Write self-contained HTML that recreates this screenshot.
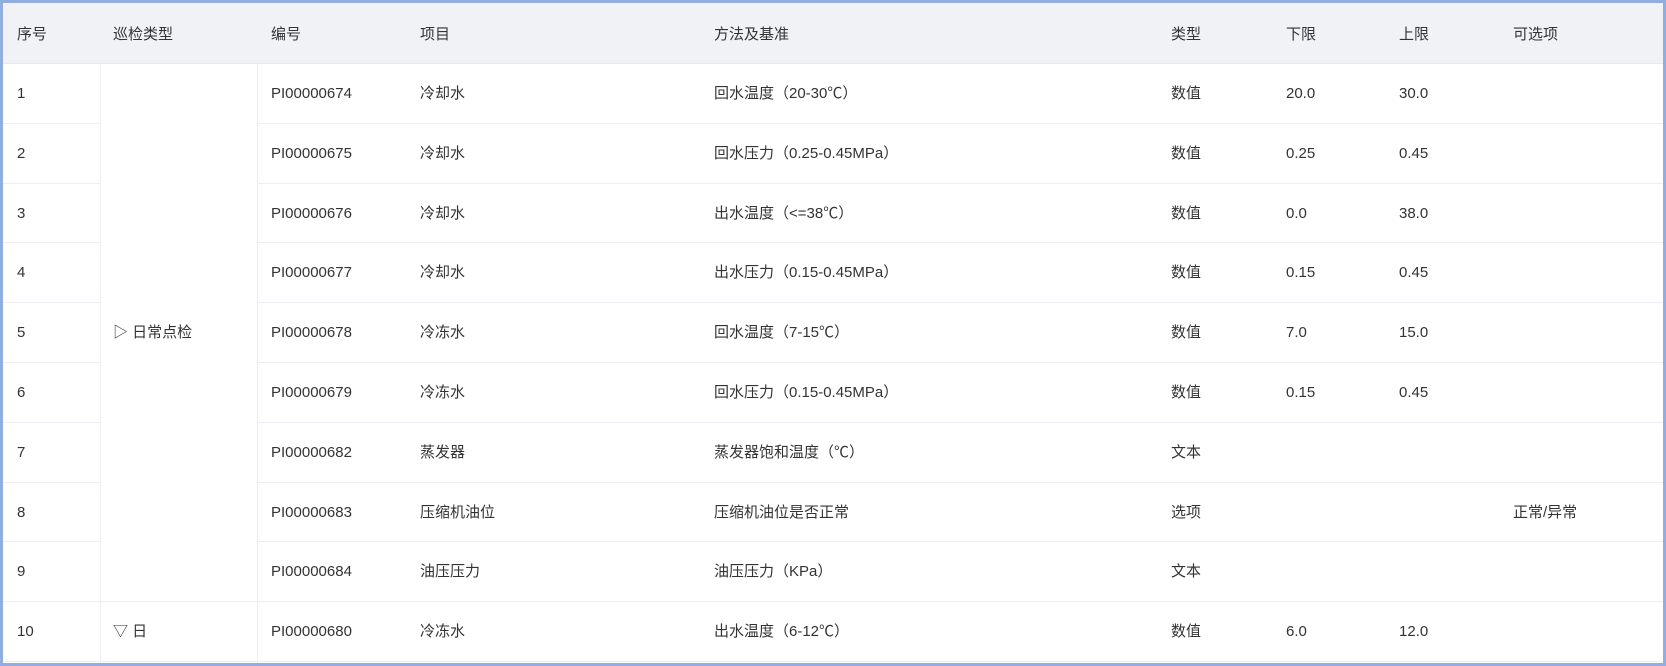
<!DOCTYPE html>
<html><head><meta charset="utf-8"><style>
*{margin:0;padding:0;box-sizing:border-box}
body{width:1666px;height:666px;background:#fff;font-family:"Liberation Sans","Noto Sans CJK SC",sans-serif;font-size:15px;color:#333;position:relative;overflow:hidden}
.frame{position:absolute;left:0;top:0;width:1666px;height:666px;border:3px solid #92addf}
.hdr{position:absolute;left:3px;top:3px;width:1660px;height:61px;background:#f0f2f6;border-bottom:1px solid #e6e9ef}
.row{position:absolute;left:3px;width:1660px;height:59.8px;border-bottom:1px solid #ebeef5}
.t{position:absolute;white-space:nowrap;line-height:22px;height:22px}
.v{position:absolute;width:1px;background:#ebeef5}
</style></head><body>
<div class="hdr"></div>
<div id="rows"></div>
<div style="position:absolute;left:101px;top:64px;width:156px;height:538px;background:#fff"></div>
<div style="position:absolute;left:101px;top:601px;width:156px;height:1px;background:#ebeef5"></div>
<div class="v" style="left:100px;top:64px;height:599px"></div>
<div class="v" style="left:257px;top:64px;height:599px"></div>
<div id="txt"></div>
<div class="frame"></div>
<script>
var cols=[17,113,271,420,714,1171,1286,1399,1513];
var hd=["序号","巡检类型","编号","项目","方法及基准","类型","下限","上限","可选项"];
var data=[
["1","","PI00000674","冷却水","回水温度（20-30℃）","数值","20.0","30.0",""],
["2","","PI00000675","冷却水","回水压力（0.25-0.45MPa）","数值","0.25","0.45",""],
["3","","PI00000676","冷却水","出水温度（<=38℃）","数值","0.0","38.0",""],
["4","","PI00000677","冷却水","出水压力（0.15-0.45MPa）","数值","0.15","0.45",""],
["5","▷ 日常点检","PI00000678","冷冻水","回水温度（7-15℃）","数值","7.0","15.0",""],
["6","","PI00000679","冷冻水","回水压力（0.15-0.45MPa）","数值","0.15","0.45",""],
["7","","PI00000682","蒸发器","蒸发器饱和温度（℃）","文本","","",""],
["8","","PI00000683","压缩机油位","压缩机油位是否正常","选项","","","正常/异常"],
["9","","PI00000684","油压压力","油压压力（KPa）","文本","","",""],
["10","▽ 日","PI00000680","冷冻水","出水温度（6-12℃）","数值","6.0","12.0",""]];
var h="",r="";
hd.forEach(function(s,i){h+='<div class="t" style="left:'+cols[i]+'px;top:24px">'+s+'</div>'});
data.forEach(function(d,j){
 var top=64+j*59.8;
 r+='<div class="row" style="top:'+top+'px"></div>';
 d.forEach(function(s,i){if(s)h+='<div class="t" style="left:'+cols[i]+'px;top:'+(top+19)+'px">'+s.replace(/</g,"&lt;")+'</div>'});
});
document.getElementById("rows").innerHTML=r;
document.getElementById("txt").innerHTML=h;
</script>
</body></html>
